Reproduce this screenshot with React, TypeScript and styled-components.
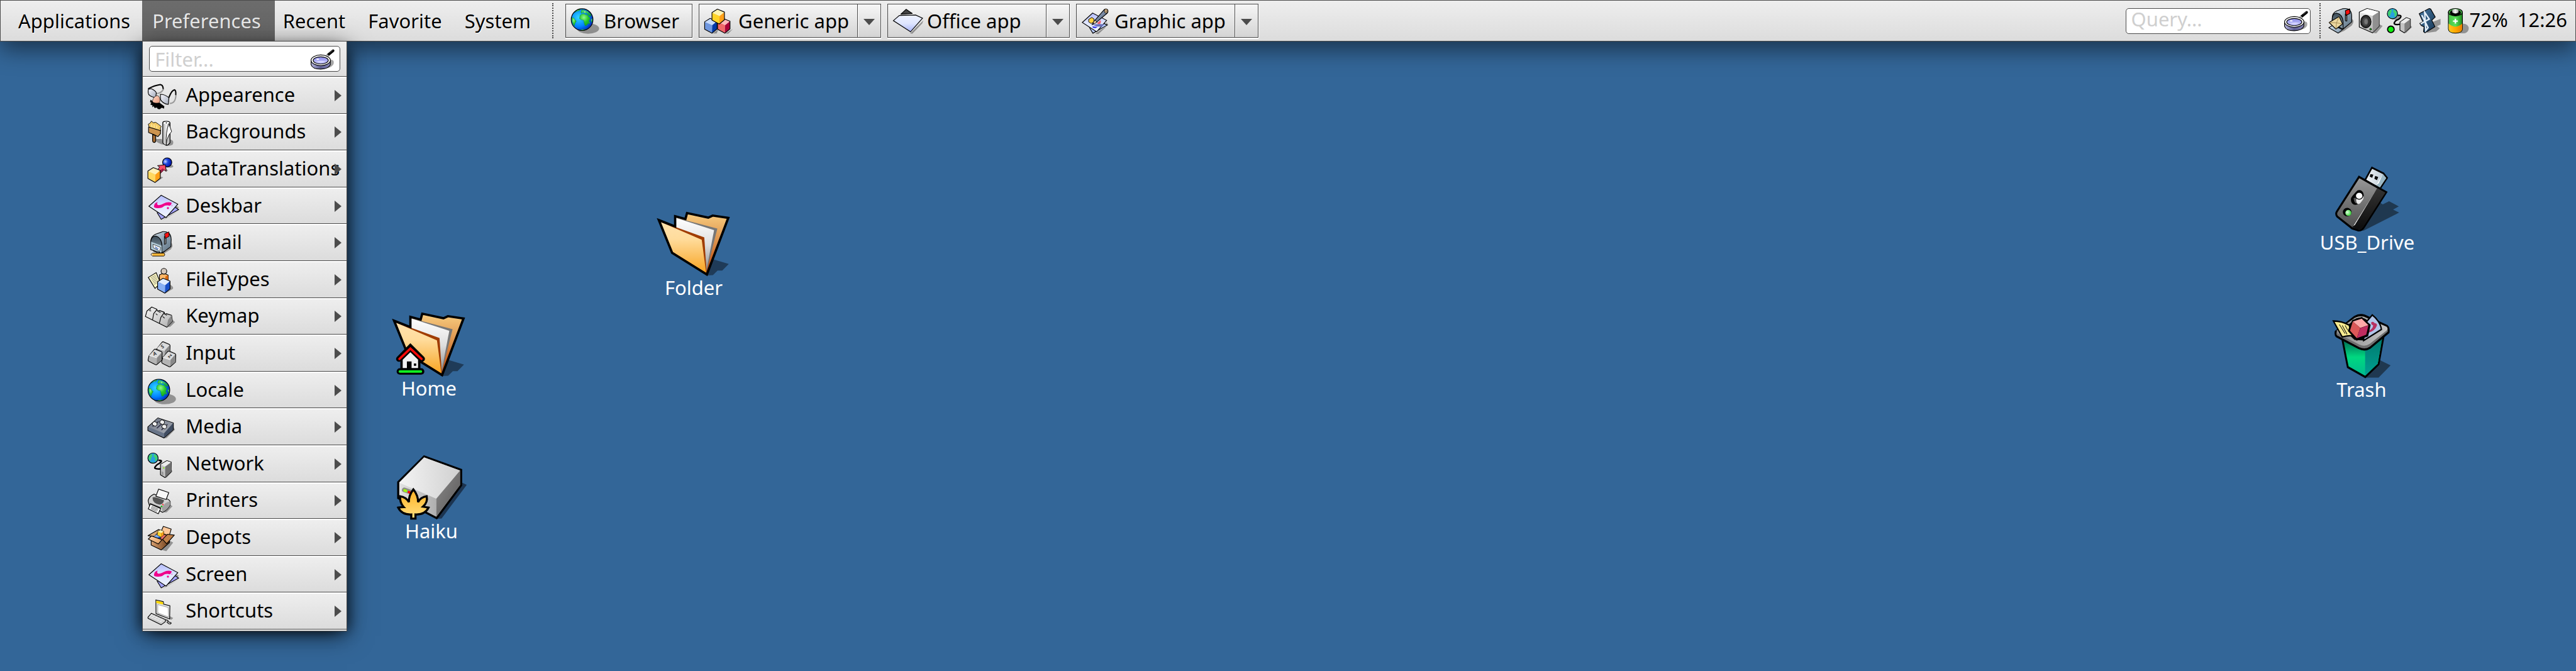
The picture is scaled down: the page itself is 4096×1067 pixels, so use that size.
import React from "react";
import styled, { createGlobalStyle } from "styled-components";

const GlobalStyle = createGlobalStyle`
  *, *::before, *::after { box-sizing: border-box; }
  html, body { margin: 0; padding: 0; }
  body, button, input {
    font-family: "Noto Sans", "Open Sans", sans-serif;
    font-size: 31px;
    line-height: 36px;
  }
  body { background: #336698; color: #000; }
`;

const ink = "#4a4a4a";

/* ---------- shared paint ---------- */

type Gradient = { id: string; stops: string[]; down?: boolean; diagonal?: boolean };

const gradients: Gradient[] = [
  { id: "folderBack", stops: ["#f8cd80", "#d98b46", "#b83a00"], down: true },
  { id: "folderFront", stops: ["#ffe2ae", "#ffdc9c", "#fbc060", "#f8a420"], down: true },
  { id: "paper", stops: ["#ffffff", "#dedede", "#8a8a8a"], down: true },
  { id: "steel", stops: ["#f4f4f4", "#d0d0d0"] },
  { id: "steelFront", stops: ["#e4e4e4", "#8c8c8c"] },
  { id: "steelSide", stops: ["#8a8a8a", "#5a5858"], diagonal: true },
  { id: "leaf", stops: ["#ffb020", "#ffe080"], down: true },
  { id: "usb", stops: ["#999999", "#4c4c4c"], down: true },
  { id: "usbSide", stops: ["#333333", "#0c0c0c"], down: true },
  { id: "plug", stops: ["#f4f6f8", "#b4c4d0"] },
  { id: "bin", stops: ["#00584c", "#00d880", "#00b890"], down: true },
  { id: "binSide", stops: ["#007a70", "#00a090"], down: true },
  { id: "rim", stops: ["#8c8c8c", "#c4c4c4"] },
  { id: "glass", stops: ["#f8f8ff", "#a4acbc"], diagonal: true },
  { id: "nose", stops: ["#ffd8c8", "#e89878"], diagonal: true },
  { id: "sheet", stops: ["#b4bcff", "#dfe5ff", "#eef4ff"], down: true },
  { id: "sheetBlue", stops: ["#eef2ff", "#dfe6ff", "#a8b4fc"], down: true },
  { id: "mail", stops: ["#dce8f0", "#8ca0b0", "#5c7080"], diagonal: true },
  { id: "mailDark", stops: ["#3c4c58", "#8ca0ac"], down: true },
  { id: "mailTray", stops: ["#dcecf4", "#7890a8"], diagonal: true },
  { id: "key", stops: ["#f6f6f6", "#b0b0b0"], diagonal: true },
  { id: "roll", stops: ["#a8a8a8", "#f0f0f0", "#9a9a9a"] },
  { id: "mixer", stops: ["#6c7484", "#a8acb4"], diagonal: true },
  { id: "lensBody", stops: ["#b8b8e0", "#5c5c90", "#8888b8"] },
  { id: "lens", stops: ["#8c8ce8", "#c8c8ff"], down: true },
  { id: "speaker", stops: ["#f0f0f0", "#a8a8a8"], diagonal: true },
  { id: "cell", stops: ["#48c048", "#58e058", "#208c20"] },
  { id: "charge", stops: ["#ffc820", "#ffa800", "#e88000"] },
  { id: "cap", stops: ["#b0b0b0", "#f8f8f8", "#a0a0a0"] },
  { id: "tooth", stops: ["#4878a0", "#183858"], diagonal: true },
  { id: "carton", stops: ["#ffd8b0", "#e09858"], diagonal: true },
  { id: "cartonDark", stops: ["#d8a070", "#6c3c18"] },
  { id: "pencil", stops: ["#a0b0c8", "#50607c"], diagonal: true },
];

const Hidden = styled.svg`
  position: absolute;
  width: 0;
  height: 0;
`;

const Paints = () => (
  <Hidden aria-hidden="true">
    <defs>
      {gradients.map((g) => (
        <linearGradient key={g.id} id={g.id} x1="0" y1="0" x2={g.down ? 0 : 1} y2={g.down || g.diagonal ? 1 : 0}>
          {g.stops.map((color, i) => (
            <stop key={i} offset={i / (g.stops.length - 1)} stopColor={color} />
          ))}
        </linearGradient>
      ))}
      <radialGradient id="ocean" cx="0.35" cy="0.4" r="0.7">
        <stop offset="0" stopColor="#30d8ff" />
        <stop offset="0.6" stopColor="#0080ff" />
        <stop offset="1" stopColor="#0020b0" />
      </radialGradient>
      <radialGradient id="land" cx="0.4" cy="0.3" r="0.8">
        <stop offset="0" stopColor="#90f890" />
        <stop offset="0.5" stopColor="#28c828" />
        <stop offset="1" stopColor="#10a020" />
      </radialGradient>
      <radialGradient id="ball" cx="0.3" cy="0.4" r="0.7">
        <stop offset="0" stopColor="#c8d8ff" />
        <stop offset="0.4" stopColor="#2048e0" />
        <stop offset="1" stopColor="#0010a0" />
      </radialGradient>
      <radialGradient id="lamp" cx="0.35" cy="0.4" r="0.7">
        <stop offset="0" stopColor="#e0ffe0" />
        <stop offset="1" stopColor="#28d028" />
      </radialGradient>
    </defs>
  </Hidden>
);

type IconProps = { w: number; h: number; box: string; stretch?: boolean; children: React.ReactNode };

const IconSvg = styled.svg<{ $w: number; $h: number }>`
  display: block;
  flex: none;
  width: ${(p) => p.$w}px;
  height: ${(p) => p.$h}px;
  overflow: visible;
`;

const Icon = ({ w, h, box, stretch, children }: IconProps) => (
  <IconSvg $w={w} $h={h} viewBox={box} preserveAspectRatio={stretch ? "none" : "xMinYMid"} aria-hidden="true">
    {children}
  </IconSvg>
);

const line = { stroke: "#000", strokeWidth: 5, strokeLinejoin: "round" as const, strokeLinecap: "round" as const };
const shade = { fill: "#000", fillOpacity: 0.35 };

/* ---------- small pictures ---------- */

const Globe = () => (
  <g>
    <ellipse cx="42" cy="62" rx="77" ry="37" {...shade} />
    <circle r="76" fill="url(#ocean)" />
    <g fill="url(#land)" stroke="#087858" strokeWidth="2">
      <path d="M-14 -30 L0 -40 L14 -40 L28 -34 L42 -32 L48 -18 L58 -12 L50 2 L48 22 L38 32 L30 42 L20 42 L14 22 L10 4 L-4 2 L-18 -8Z" />
      <path d="M-8 -54 L-2 -70 Q40 -64 62 -36 L60 -22 L46 -32 L34 -40 L30 -48 L18 -44 L6 -50 L-6 -44Z" />
      <path d="M-71 -14 L-58 -12 L-48 2 L-40 10 L-50 28 L-54 46 Q-74 18 -71 -14Z" />
      <path d="M-54 -48 Q-34 -72 -10 -74 L-20 -62 L-36 -58Z" />
      <path d="M62 0 L70 -8 L72 12 L66 20Z" />
      <path d="M48 20 L56 14 L52 30 L46 30Z" />
      <path d="M-10 70 L26 68 L12 75 L-6 75Z" />
    </g>
    <path d="M4 -62 L12 -56 L6 -50 M24 -56 L34 -52 M14 -66 L20 -60 M38 -46 L50 -40" stroke="#0880a0" strokeWidth="4" fill="none" />
    <circle r="76" fill="none" {...line} />
  </g>
);

type CubeProps = { x: number; y: number; s?: number; top: string; left: string; right: string };

/* A cube seen from above, centred on its front vertex. */
const Cube = ({ x, y, s = 1, top, left, right }: CubeProps) => (
  <g transform={`translate(${x} ${y}) scale(${s})`}>
    <path d="M-43 -22 L-5 -46 L44 -26 L10 2Z" fill={top} />
    <path d="M-43 -22 L10 2 L8 58 L-43 30Z" fill={left} />
    <path d="M44 -26 L10 2 L8 58 L44 28Z" fill={right} />
    <path d="M-43 -22 L-5 -46 L44 -26 L44 28 L8 58 L-43 30Z" fill="none" {...line} />
  </g>
);

const Cubes = () => (
  <g>
    <path d="M1078 232 L1118 200 L1105 232Z M1166 232 L1218 200 L1185 234Z" {...shade} />
    <Cube x={1064} y={172} top="#c8dcff" left="#7098e0" right="#0038a8" />
    <Cube x={1154} y={172} top="#ffb8b8" left="#f06868" right="#a80038" />
    <Cube x={1115} y={108} top="#fff4b0" left="#ffd428" right="#ffa018" />
  </g>
);

const Sheets = ({ children }: { children?: React.ReactNode }) => (
  <g>
    <path d="M176 176 L296 108 L206 162Z M262 74 L292 84 L280 100Z" {...shade} />
    <path d="M140 124 L168 170 L290 102 L262 84Z" fill="#a4a4ff" {...line} strokeLinejoin="miter" />
    <path d="M168 2 L284 64 L202 158 L82 79Z" fill="url(#sheet)" {...line} strokeLinejoin="miter" />
    {children}
  </g>
);

const PinkSheets = () => (
  <Sheets>
    <path
      d="M118 78 Q122 52 145 51 Q132 64 148 71 Q164 72 184 60 Q214 44 240 54 Q244 64 228 76 Q212 68 192 76 Q174 94 142 92 Q114 90 118 78Z"
      fill="#f0008c"
    />
    <circle cx="215" cy="92" r="7" fill="#f0008c" />
    <circle cx="243" cy="75" r="3" fill="#f0008c" />
  </Sheets>
);

const MagnifierIcon = () => (
  <Icon w={41} h={34} box="1208 66 180 150">
    <path d="M1340 145 Q1380 140 1374 172 Q1364 205 1290 210Z" {...shade} />
    <path d="M1334 112 L1370 82" stroke="#000" strokeWidth="18" strokeLinecap="round" />
    <path d="M1346 96 L1368 78" stroke="#666" strokeWidth="4" />
    <path d="M1320 110 L1336 122" stroke="#bbb" strokeWidth="14" />
    <path d="M1215 148 V180 Q1225 211 1283 211 Q1340 208 1350 180 V148Z" fill="url(#lensBody)" {...line} />
    <ellipse cx="1283" cy="149" rx="68" ry="37" fill="#fff" {...line} />
    <ellipse cx="1283" cy="150" rx="53" ry="25" fill="url(#lens)" {...line} />
    <path d="M1250 158 Q1280 172 1318 156 Q1290 150 1250 158Z" fill="#d8d8ff" />
    <ellipse cx="1262" cy="142" rx="10" ry="4" fill="#fff" />
  </Icon>
);

/* ---------- menu pictures ---------- */

const menuBox = (top: number) => `57 ${top + 32} 237 202`;
const MenuIcon = ({ top, children }: { top: number; children: React.ReactNode }) => (
  <Icon w={54} h={46} box={menuBox(top)}>
    {children}
  </Icon>
);

const AppearanceIcon = () => (
  <MenuIcon top={262}>
    <path d="M130 382 Q170 380 184 350 M228 450 Q268 450 271 392" fill="none" stroke="#999" strokeWidth="9" />
    <path d="M80 346 Q120 324 162 318 Q180 320 182 346" fill="none" stroke="#000" strokeWidth="9" strokeLinecap="round" />
    <path d="M78 352 L98 347 Q128 360 134 376 L130 406 Q104 408 86 392 Q74 384 78 352Z" fill="url(#glass)" {...line} />
    <path d="M222 408 Q242 356 262 355 Q272 360 270 388" fill="none" stroke="#000" strokeWidth="9" strokeLinecap="round" />
    <path d="M94 424 L110 436 L158 446 L190 470 L188 486 L172 480 L158 490 L144 488 L138 478 L122 482 L116 470 L105 476 L108 464 L92 456 L100 446 L90 440Z" />
    <path d="M108 440 C104 420 124 394 144 395 C160 402 162 430 156 446 C140 450 116 448 108 440Z" fill="url(#nose)" {...line} strokeWidth={3} />
    <path d="M162 386 Q196 386 222 410 L218 456 Q182 454 164 424Z" fill="url(#glass)" {...line} />
  </MenuIcon>
);

const BackgroundsIcon = () => (
  <MenuIcon top={519}>
    <path d="M130 700 L172 700 L186 740 Q150 735 130 715Z M232 704 Q262 712 248 740 Q230 752 206 746Z" {...shade} />
    <path d="M84 618 L78 597 L90 590 L100 576 L113 587 L130 584 L147 596 L170 614 L162 622 L165 642Z" fill="#f4cc68" {...line} strokeWidth={4} />
    <path d="M100 598 L104 618 M118 600 L120 622 M136 606 L138 626" stroke="#fff0b0" strokeWidth="5" />
    <path d="M80 617 L163 642 V664 L145 684 L118 670 L80 655Z" fill="#cc9450" {...line} />
    <path d="M108 670 L130 676 V714 Q128 725 118 725 Q108 723 108 714Z" fill="#a06830" {...line} />
    <path d="M179 586 Q182 577 204 577 Q228 577 230 588 V726 Q216 745 204 745 Q178 735 179 724Z" fill="url(#roll)" {...line} />
    <ellipse cx="204" cy="588" rx="20" ry="8" fill="#fff" />
    <circle cx="204" cy="588" r="4" />
    <path d="M222 594 L241 648 L222 672 Q206 700 203 745 Q198 650 222 594Z" fill="#fff" {...line} strokeWidth={4} />
  </MenuIcon>
);

const DataTranslationsIcon = () => (
  <MenuIcon top={776}>
    <path d="M236 878 Q262 884 248 896 Q236 902 214 896Z M200 900 L216 920 L200 926Z M132 1002 L182 966 L166 962 L160 975Z" {...shade} />
    <circle cx="210" cy="862" r="32" fill="url(#ball)" {...line} />
    <path d="M144 884 L197 878 L203 924 L188 914 L163 938 L144 912 L156 896Z" fill="#f84c68" {...line} strokeWidth={4} />
    <path d="M188 914 L163 938 L158 920 L180 902Z" fill="#a02048" />
    <Cube x={118} y={944} top="#fff0b8" left="#ffd860" right="#ffa018" />
  </MenuIcon>
);

const PinkSheetsIcon = () => (
  <MenuIcon top={0}>
    <g transform="translate(0 54)">
      <PinkSheets />
    </g>
  </MenuIcon>
);

const EmailIcon = () => (
  <MenuIcon top={1292}>
    <path d="M240 1425 Q256 1445 236 1470 L182 1505 L176 1496Z" {...shade} />
    <path d="M95 1415 Q98 1380 128 1366 L180 1347 Q236 1344 238 1402 L236 1452 L174 1498 L95 1472Z" fill="url(#mail)" {...line} />
    <path d="M95 1472 V1415 Q102 1378 130 1378 Q168 1388 173 1440 V1498Z" fill="url(#mailDark)" {...line} />
    <path d="M98 1418 L172 1446 V1496 L98 1470Z" fill="#b4ccd8" />
    <path d="M112 1436 L164 1458 L156 1490 L148 1478 L114 1460Z" fill="#fff" {...line} strokeWidth={3} />
    <path d="M124 1452 L150 1468 M126 1458 L144 1472" stroke="#2050b0" strokeWidth="4" />
    <path d="M192 1380 L202 1376 V1432 L192 1436Z" fill="#888" {...line} strokeWidth={4} />
    <path d="M193 1362 L222 1349 L224 1380 L198 1394Z" fill="#ff1010" {...line} strokeWidth={4} />
    <path d="M112 1484 L156 1500 M168 1494 L196 1484" stroke="#000" strokeWidth="4" />
    <path d="M108 1498 H186 Q193 1500 193 1508 Q193 1516 186 1518 H108 L97 1508Z" fill="#ffb838" {...line} strokeWidth={4} />
    <path d="M108 1500 V1516 L98 1508Z" fill="#f8d8b0" />
  </MenuIcon>
);

const FileTypesIcon = () => (
  <MenuIcon top={80}>
    <path d="M230 246 Q258 262 250 276 L196 308 L210 290Z" {...shade} />
    <path d="M78 196 L133 163 L164 236 L125 273Z" fill="#fffac4" {...line} strokeLinejoin="miter" />
    <path d="M94 200 L130 180 M99 209 L134 189 M104 218 L139 198 M109 227 L142 208 M114 236 L146 218 M119 245 L148 228" stroke="#555" strokeWidth="3" />
    <path d="M156 178 L186 166 L217 180 V222 H156Z" fill="#ffb868" {...line} />
    <path d="M197 190 L217 180 V222 H197Z" fill="#d86810" />
    <circle cx="187" cy="153" r="20" fill="#d4c8bc" {...line} />
    <Cube x={186} y={248} top="#e0ecff" left="#88b0f4" right="#1850c8" />
  </MenuIcon>
);

const KeymapIcon = () => (
  <MenuIcon top={338}>
    <path d="M248 496 L265 512 L232 543 L207 548Z" {...shade} />
    <path d="M102 406 L138 422 L142 434 L158 431 L188 442 L192 456 L205 453 L240 463 L247 505 L207 547 L58 472 L68 435Z" fill="url(#key)" {...line} />
    <path d="M240 463 L247 505 L207 547 L216 496Z" fill="#888" />
    <path d="M138 424 L116 452 L108 494 M190 444 L166 478 L156 518" fill="none" {...line} />
    <path d="M84 430 L98 434 M92 420 L94 426 M130 452 L142 462 M148 438 L164 444 M178 472 L192 484 M198 460 L208 464" stroke="#222" strokeWidth="5" />
  </MenuIcon>
);

const KeyLetter = styled.text`
  font-size: 34px;
  font-weight: 600;
  text-anchor: middle;
  fill: #222;
`;

const Keycap = ({ x, y, letter, turn }: { x: number; y: number; letter: string; turn: number }) => (
  <g transform={`translate(${x} ${y})`}>
    <path d="M-4 -54 Q0 -57 6 -54 L44 -38 Q50 -34 50 -28 L48 22 L12 53 Q8 56 2 53 L-44 30 Q-50 26 -48 18 L-42 -8Z" fill="#b4b4b4" {...line} />
    <path d="M-4 -50 L46 -32 L14 4 L-40 -12Z" fill="#dcdcdc" />
    <path d="M46 -30 V22 L12 50 L14 6Z" fill="#888" />
    <path d="M-42 -12 L12 6" stroke="#fff" strokeWidth="4" />
    <KeyLetter transform={`translate(2 -12) rotate(${turn})`}>{letter}</KeyLetter>
  </g>
);

const InputIcon = () => (
  <MenuIcon top={596}>
    <Keycap x={180} y={703} letter="S" turn={-30} />
    <Keycap x={125} y={754} letter="A" turn={-20} />
    <Keycap x={220} y={768} letter="Z" turn={40} />
  </MenuIcon>
);

const LocaleIcon = () => (
  <MenuIcon top={852}>
    <g transform="translate(152 982)">
      <Globe />
    </g>
  </MenuIcon>
);

const Knob = ({ x, y }: { x: number; y: number }) => (
  <path transform={`translate(${x} ${y})`} d="M-16 -8 L-2 -17 L15 -10 L16 6 L4 16 L-14 8Z" fill="#eee" {...line} strokeWidth={4} />
);

const MediaIcon = () => (
  <MenuIcon top={1110}>
    <path d="M255 1245 L264 1262 L206 1320 L188 1322Z" {...shade} />
    <path d="M145 1180 L253 1215 V1262 L187 1320 L75 1268 V1243Z" fill="#687488" {...line} />
    <path d="M145 1182 L251 1216 L188 1287 L78 1243Z" fill="url(#mixer)" />
    <path d="M251 1217 V1262 L189 1317 V1287Z" fill="#404c60" />
    <path d="M108 1240 L150 1204 M138 1252 L178 1215 M170 1264 L212 1224" stroke="#282840" strokeWidth="6" />
    <Knob x={123} y={1222} />
    <Knob x={175} y={1210} />
    <Knob x={190} y={1241} />
  </MenuIcon>
);

const MiniGlobe = ({ x, y }: { x: number; y: number }) => (
  <g transform={`translate(${x} ${y})`}>
    <circle r="36" fill="#28a0e0" />
    <path d="M-32 -10 L-18 -26 L-4 -28 L-8 -8 L-14 4 L-18 20 L-30 12Z M8 -30 L30 -14 L32 6 L20 22 L12 16 L16 0 L4 -12Z M-10 24 L4 30 L-4 34Z" fill="#40d070" />
    <circle r="36" fill="none" {...line} />
  </g>
);

const NetworkIcon = () => (
  <MenuIcon top={-43}>
    <path d="M240 128 L247 140 L206 184 L196 186Z" {...shade} />
    <path d="M148 64 C190 60 160 84 140 94 C108 122 126 126 166 123" fill="none" stroke="#000" strokeWidth="11" />
    <MiniGlobe x={111} y={48} />
    <path d="M208 66 L238 76 L237 145 L195 184 L163 165 V92Z" fill="#c4c4c4" {...line} />
    <path d="M208 68 L236 77 L195 108 L165 93Z" fill="#ececec" />
    <path d="M236 79 V145 L196 182 V108Z" fill="#707070" />
    <path d="M171 140 L184 146 V170 L171 162Z" fill="#999" />
    <circle cx="186" cy="117" r="5" fill="#80f000" />
  </MenuIcon>
);

const PrintersIcon = () => (
  <MenuIcon top={215}>
    <path d="M232 378 L247 388 L206 430 L184 430Z" {...shade} />
    <path d="M118 303 Q82 318 77 350 L86 384 L178 430 Q212 416 231 378 V356 Q226 340 204 336Z" fill="#d0d0d0" {...line} />
    <path d="M231 356 V378 Q212 414 178 428 L172 400 Q200 350 231 356Z" fill="#a0a0a0" />
    <path d="M150 268 L221 292 L203 340 L131 318Z" fill="#f8f8f8" {...line} />
    <path d="M108 326 Q120 316 188 346 Q184 374 156 377 Q106 366 108 326Z" fill="#555" />
    <path d="M90 364 L168 396 L160 408 L90 378Z" fill="#333" />
    <path d="M92 372 L164 404 L148 440 L78 406Z" fill="#fff" {...line} />
    <path d="M102 388 L148 408 M98 396 L144 416 M96 404 L138 424" stroke="#111" strokeWidth="3" />
    <circle cx="180" cy="376" r="6" fill="#f05050" />
    <circle cx="171" cy="389" r="6" fill="#18b018" />
  </MenuIcon>
);

const DepotsIcon = () => (
  <MenuIcon top={473}>
    <path d="M226 626 L252 640 L204 700 L172 692Z" {...shade} />
    <path d="M98 616 V658 L168 692 L226 640 V606Z" fill="url(#cartonDark)" {...line} />
    <path d="M76 592 L150 549 L166 556 L118 598Z" fill="#d8a878" {...line} />
    <path d="M183 527 L238 546 L224 592 L164 572Z" fill="#ffc898" {...line} />
    <path d="M110 600 L160 572 L226 592 L172 628Z" fill="#5c3418" />
    <path d="M116 596 L140 582 L162 596 L160 620Z" fill="#78a8f0" />
    <path d="M140 606 L162 600 V622Z" fill="#0038a8" />
    <path d="M166 602 L186 586 L212 594 L172 624Z" fill="#f07070" />
    <Cube x={164} y={574} s={0.5} top="#fff4b0" left="#ffd428" right="#ffa018" />
    <path d="M78 616 L100 594 L174 620 L148 650Z" fill="url(#carton)" {...line} />
    <path d="M178 618 L212 582 L260 588 L206 648Z" fill="#c08048" {...line} />
  </MenuIcon>
);

const ShortcutsIcon = () => (
  <MenuIcon top={988}>
    <path d="M228 1155 L252 1168 L240 1180 L226 1176Z" {...shade} />
    <path d="M196 1182 Q222 1180 214 1192 L238 1202 Q238 1212 220 1208 L208 1196" fill="#ddd" {...line} />
    <path d="M131 1042 L183 1054 L185 1072 L229 1082 L227 1175 L132 1138Z" fill="#e4e4e4" {...line} strokeLinejoin="miter" />
    <path d="M134 1046 L181 1057 V1074 L134 1064Z" fill="#ffd800" />
    <path d="M144 1074 L217 1094 L220 1162 L144 1132Z" fill="#fff" stroke="#aaa" strokeWidth="5" />
    <path d="M100 1135 L200 1180 L196 1195 L168 1215 L76 1170 V1162Z" fill="#ccc" {...line} />
    <path d="M94 1146 L186 1188 M86 1156 L178 1198 M106 1142 L86 1160 M124 1150 L104 1168 M142 1158 L122 1178 M160 1166 L140 1186 M178 1174 L158 1196" stroke="#fff" strokeWidth="3" />
  </MenuIcon>
);

/* ---------- toolbar pictures ---------- */

const BrowserIcon = () => (
  <Icon w={44} h={41} box="90 55 193 180">
    <g transform="translate(167 135)">
      <Globe />
    </g>
  </Icon>
);

const GenericIcon = () => (
  <Icon w={44} h={41} box="1019 55 193 180">
    <Cubes />
  </Icon>
);

const OfficeIcon = () => (
  <Icon w={44} h={41} box="0 55 193 180">
    <path d="M130 222 L212 140 L204 162 L134 234 L118 230Z" {...shade} />
    <path d="M91 63 L134 92 L54 97Z" fill="#444" {...line} />
    <path d="M44 106 L158 103 L206 125 L122 220 L2 142Z" fill="url(#sheetBlue)" {...line} strokeLinejoin="miter" />
  </Icon>
);

const GraphicIcon = () => (
  <Icon w={44} h={41} box="84 55 193 180">
    <path d="M178 234 L268 172 L258 150 L250 190 L200 236Z" {...shade} />
    <path d="M138 190 L162 230 L262 173 L236 160Z" fill="#b8ccff" {...line} strokeLinejoin="miter" />
    <path d="M160 89 L258 140 L188 220 L88 155Z" fill="url(#sheet)" {...line} strokeLinejoin="miter" />
    <path d="M134 132 L154 120 L170 130 L168 152 L150 162 L134 152Z" fill="#ffd040" {...line} strokeWidth={4} />
    <path d="M216 138 Q222 160 208 166 Q194 168 192 158Z" fill="#f06070" />
    <path d="M162 170 Q200 164 240 168 L224 184 Q190 186 162 170Z" fill="#6870b8" />
    <path d="M158 182 L196 186 L180 194 L162 192Z" fill="#2828f0" />
    <path d="M176 140 L240 66 Q256 54 266 68 Q270 82 262 90 L188 152Z" fill="url(#pencil)" {...line} />
    <path d="M156 170 L176 138 L190 152Z" fill="#f0d0a0" {...line} strokeWidth={4} />
    <path d="M156 170 L164 156 L170 163Z" />
    <ellipse cx="254" cy="75" rx="12" ry="14" fill="#f4cc98" {...line} strokeWidth={4} />
    <circle cx="254" cy="75" r="4" />
  </Icon>
);

/* ---------- tray pictures ---------- */

const TrayMail = () => (
  <Icon w={41} h={41} box="8 50 180 180">
    <path d="M174 125 Q196 140 172 172 L120 208 L80 226Z" {...shade} />
    <path d="M36 120 Q36 84 66 70 L108 54 Q170 42 172 104 V146 L112 196 L36 160Z" fill="url(#mail)" {...line} />
    <path d="M36 130 Q36 86 66 84 Q108 92 112 144 V196 L36 160Z" fill="url(#mailDark)" {...line} />
    <path d="M12 186 L42 168 L108 200 L78 224Z" fill="url(#mailTray)" {...line} />
    <path d="M14 150 L84 108 L108 160 L62 196Z" fill="#ecd8a0" {...line} />
    <path d="M14 150 L66 152 L84 108 M66 152 L62 196 M66 152 L106 160" fill="none" stroke="#a08850" strokeWidth="4" />
    <path d="M128 90 L138 86 V140 L128 138Z" fill="#999" {...line} />
    <path d="M128 68 L158 55 L160 86 L132 100Z" fill="#ff1010" {...line} />
  </Icon>
);

const TraySpeaker = () => (
  <Icon w={41} h={41} box="219 50 180 180">
    <path d="M364 162 L388 174 L344 226 L318 222Z" {...shade} />
    <path d="M280 52 L364 74 V176 L318 222 L225 182 V78Z" fill="url(#speaker)" {...line} />
    <path d="M280 54 L362 75 L318 104 L227 79Z" fill="#fcfcfc" />
    <path d="M362 76 V176 L319 220 V104Z" fill="#909090" />
    <ellipse cx="271" cy="144" rx="36" ry="44" fill="#333" {...line} />
    <ellipse cx="268" cy="144" rx="24" ry="32" fill="#4c4c4c" stroke="#222" strokeWidth="4" />
    <ellipse cx="272" cy="144" rx="12" ry="18" fill="#777" />
    <circle cx="304" cy="197" r="6" fill="#20e020" {...line} strokeWidth={4} />
  </Icon>
);

const TrayNetwork = () => (
  <Icon w={41} h={41} box="430 50 180 180">
    <ellipse cx="474" cy="112" rx="34" ry="18" {...shade} />
    <path d="M584 172 L594 182 L552 222 L540 224Z" {...shade} />
    <path d="M494 100 C534 96 512 126 484 134 C456 160 470 168 510 163" fill="none" stroke="#000" strokeWidth="10" />
    <MiniGlobe x={457} y={88} />
    <path d="M554 116 L582 126 V184 L540 222 L509 204 V148Z" fill="#c4c4c4" {...line} />
    <path d="M554 118 L580 127 L540 158 L511 148Z" fill="#ececec" />
    <path d="M581 128 V184 L541 220 V158Z" fill="#808080" />
    <circle cx="446" cy="198" r="23" fill="#10f010" stroke="#000" strokeWidth="8" />
  </Icon>
);

const TrayBluetooth = () => (
  <Icon w={41} h={41} box="643 50 180 180">
    <path d="M730 150 L795 125 V164 L770 176 L790 190 L764 214 L700 222Z" {...shade} />
    <path d="M646 88 L716 52 L726 56 L758 112 L734 134 L756 180 L686 222 L676 214 L680 180 L662 172 L650 156 L672 146Z" fill="url(#tooth)" {...line} />
    <path d="M656 160 L716 126 L684 78 L692 206 L708 186 L664 98" fill="none" stroke="#e8f2fa" strokeWidth="10" />
  </Icon>
);

const TrayBattery = () => (
  <Icon w={33} h={41} box="852 50 145 180">
    <path d="M948 158 Q992 160 990 196 Q984 228 946 226 L900 224Z" {...shade} />
    <path d="M848 78 V196 Q850 224 897 224 Q944 224 946 196 V78Z" fill="url(#cell)" {...line} />
    <path d="M850 158 Q897 200 945 158 V196 Q942 222 897 222 Q852 222 850 196Z" fill="url(#charge)" />
    <ellipse cx="897" cy="78" rx="49" ry="26" fill="#48b048" {...line} />
    <ellipse cx="897" cy="82" rx="38" ry="22" fill="#000" />
    <path d="M875 62 Q897 48 919 62 V80 Q897 94 875 80Z" fill="url(#cap)" />
    <path d="M897 124 V158 M880 141 H914" stroke="#fff" strokeWidth="10" />
  </Icon>
);

/* ---------- desktop pictures ---------- */

const FolderArt = () => (
  <g>
    <path d="M1440 290 L1508 311 L1480 340 L1460 340 L1440 360 L1412 361Z" fill="#1f3b58" />
    <path d="M1208 118 L1278 146 V101 L1322 113 L1329 87 L1420 107 L1439 98 L1506 108 L1414 357 L1265 262Z" fill="url(#folderBack)" />
    <path d="M1284 108 L1459 155 L1412 345Z" fill="#777" />
    <path d="M1282 108 L1445 162 L1411 345 L1282 150Z" fill="url(#paper)" />
    <path d="M1216 125 L1403 194 L1413 352Z" fill="#a03c00" />
    <path d="M1216 126 L1392 204 L1411 350 L1268 258Z" fill="url(#folderFront)" />
    <path d="M1208 118 L1278 146 V101 L1322 113 L1329 87 L1420 107 L1439 98 L1506 108 L1414 357 L1265 262Z" fill="none" stroke="#000" strokeWidth="10" />
  </g>
);

const FolderIcon = () => (
  <Icon w={116} h={102} box="1201 82 313 282" stretch>
    <FolderArt />
  </Icon>
);

const HomeIcon = () => (
  <Icon w={116} h={102} box="64 525 313 282" stretch>
    <g transform="translate(-1137 443)">
      <FolderArt />
    </g>
    <path d="M103 730 V775 H179 V730 L141 692Z" fill="#f0f0f0" stroke="#000" strokeWidth="10" />
    <path d="M92 729 L141 678 L191 729" fill="none" stroke="#000" strokeWidth="25" strokeLinecap="round" />
    <path d="M94 729 L141 683 L189 729" fill="none" stroke="#ff0808" strokeWidth="10" strokeLinecap="round" />
    <path d="M126 740 H146 V772 H126Z M156 749 H166 V759 H156Z" />
    <path d="M96 784 H187" stroke="#000" strokeWidth="28" strokeLinecap="round" />
    <path d="M96 784 H186" stroke="#10f020" strokeWidth="11" strokeLinecap="round" />
  </Icon>
);

const HaikuIcon = () => (
  <Icon w={116} h={102} box="72 1158 313 282" stretch>
    <path d="M360 1278 L380 1288 L272 1436 L252 1437Z" fill="#1c3450" />
    <path d="M197 1163 L356 1222 V1290 L251 1434 L86 1346 V1276Z" fill="url(#steelFront)" stroke="#000" strokeWidth="9" />
    <path d="M197 1167 L352 1225 L249 1349 L90 1278Z" fill="url(#steel)" />
    <path d="M351 1226 V1289 L250 1427 V1349Z" fill="url(#steelSide)" />
    <path d="M112 1310 L140 1320" stroke="#8c8c84" strokeWidth="20" strokeLinecap="round" />
    <path d="M110 1306 L125 1311 L122 1321 L108 1316Z" fill="#a0ff00" />
    <path d="M129 1314 L140 1318 L136 1328 L126 1322Z" fill="#f00" />
    <path
      d="M151 1308 Q172 1335 171 1364 Q182 1342 208 1338 Q214 1364 192 1384 Q206 1386 216 1388 Q200 1420 160 1418 V1436 H142 V1418 Q102 1420 86 1388 Q96 1386 110 1386 Q92 1366 94 1338 Q120 1342 132 1364 Q130 1336 151 1308Z"
      fill="url(#leaf)"
      stroke="#000"
      strokeWidth="9"
    />
  </Icon>
);

const UsbIcon = () => (
  <Icon w={116} h={102} box="240 98 510 391" stretch>
    <path d="M570 310 L604 328 L648 309 L716 340 L676 360 L718 378 L470 488 L440 488Z" fill="#1f3850" />
    <path d="M528 104 L609 139 L634 166 L582 236 L480 180Z" fill="url(#plug)" stroke="#000" strokeWidth="11" />
    <path d="M604 144 L628 168 L580 228 L556 210Z" fill="#9cb8c4" />
    <path d="M604 144 L556 212 L576 200Z" fill="#fff" />
    <path d="M518 143 L538 147 L530 166 L512 158Z M551 155 L572 161 L563 180 L545 172Z" />
    <path d="M438 160 L628 254 L470 470 Q455 490 430 486 L390 474 L285 402 Q272 386 284 370Z" fill="url(#usb)" stroke="#000" strokeWidth="13" />
    <path d="M564 230 L622 256 L466 466 Q450 484 426 480 L392 466Z" fill="url(#usbSide)" />
    <path d="M564 230 L396 462 L410 452 Z" fill="#fff" />
    <path d="M412 300 L440 272" stroke="#000" strokeWidth="62" strokeLinecap="round" />
    <path d="M434 306 L450 288" stroke="#e8e8e8" strokeWidth="38" strokeLinecap="round" />
    <path d="M400 290 Q404 326 424 322 Q414 306 420 286Z" fill="#555" />
    <ellipse cx="439" cy="276" rx="25" ry="21" fill="#fff" stroke="#000" strokeWidth="5" />
    <ellipse cx="355" cy="375" rx="30" ry="26" />
    <ellipse cx="363" cy="380" rx="21" ry="18" fill="url(#lamp)" />
  </Icon>
);

const TrashIcon = () => (
  <Icon w={116} h={102} box="194 997 510 391" stretch>
    <path d="M578 1280 L652 1311 L568 1386 H478Z" fill="#1f3850" />
    <path d="M312 1140 L353 1322 L475 1382 L568 1304 L602 1140Z" fill="url(#bin)" stroke="#000" strokeWidth="13" />
    <path d="M474 1190 V1374 L562 1302 L592 1150Z" fill="url(#binSide)" />
    <path d="M268 1106 L400 1016 Q435 998 470 1008 L628 1072 Q642 1082 638 1110 L508 1204 Q472 1224 430 1206 L274 1134 Q264 1126 268 1106Z" fill="#707070" stroke="#000" strokeWidth="13" />
    <path d="M274 1100 L402 1022 Q436 1008 466 1016 L624 1076 Q636 1086 626 1098 L506 1180 Q472 1200 432 1184 L280 1116Z" fill="url(#rim)" />
    <path d="M320 1090 L410 1026 Q440 1014 470 1026 L590 1084 L470 1160 L400 1156Z" fill="#000" />
    <path d="M252 1041 Q310 1040 362 1066 L386 1130 Q340 1132 314 1138Z" fill="#f8ec90" stroke="#000" strokeWidth="9" />
    <path d="M294 1062 L334 1118 M314 1068 L348 1122 M334 1068 L352 1096" stroke="#000" strokeWidth="4" />
    <path d="M524 1004 Q580 1044 588 1092 L464 1160 L470 1060Z" fill="#b0c4e8" stroke="#000" strokeWidth="9" />
    <path d="M516 1050 Q530 1040 540 1054 Q560 1056 556 1070 Q540 1104 498 1112 L502 1100 Q530 1086 530 1066 Q516 1066 516 1050Z" fill="#b83060" />
    <path d="M388 1040 L450 1023 L506 1066 L490 1130 L416 1154 L360 1100Z" fill="#000" stroke="#000" strokeWidth="12" />
    <path d="M388 1044 L450 1027 L497 1066 L440 1083Z" fill="#ffa8a8" />
    <path d="M388 1044 L440 1083 L416 1146 L368 1100Z" fill="#dc5858" />
    <path d="M497 1067 L440 1084 L416 1146 L482 1124Z" fill="#c02c60" />
  </Icon>
);

/* ---------- layout ---------- */

const Desktop = styled.div`
  position: relative;
  display: flex;
  flex-direction: column;
  min-height: 100vh;
  background: #336698;
  overflow: hidden;
`;

const TopBar = styled.header`
  position: relative;
  z-index: 1;
  display: flex;
  align-items: center;
  justify-content: space-between;
  height: 66px;
  border: 1px solid ${ink};
  background: linear-gradient(#eeeeee, #dcdcdc);
  box-shadow: 0 12px 36px rgba(0, 0, 0, 0.5);
`;

const BarGroup = styled.div`
  display: flex;
  align-items: center;
  align-self: stretch;
`;

const MenuBar = styled.nav`
  display: flex;
  align-self: stretch;
`;

const MenuSlot = styled.div`
  position: relative;
  display: flex;
`;

const MenuTitle = styled.button<{ $open?: boolean; $left: number; $right: number }>`
  border: 0;
  padding: 0 ${(p) => p.$right}px 0 ${(p) => p.$left}px;
  background: ${(p) => (p.$open ? "linear-gradient(#6c6c6c, #646464)" : "none")};
  color: ${(p) => (p.$open ? "#e8e8e8" : "#000")};
  text-shadow: 1px 1px 0 ${(p) => (p.$open ? "#505050" : "#fff")};
  white-space: nowrap;
`;

const Divider = styled.div<{ $left: number; $right: number }>`
  height: 56px;
  margin: 0 ${(p) => p.$right}px 0 ${(p) => p.$left}px;
  border-left: 2px dotted ${ink};
`;

const AppBar = styled.div`
  display: flex;
  gap: 10px;
`;

const AppFrame = styled.div`
  display: flex;
  height: 54px;
  border: 1px solid ${ink};
  background: linear-gradient(#f6f6f6, #d4d4d4);
  box-shadow: 1px 1px 0 #fff, 0 2px 0 #fff;
`;

const AppButton = styled.button<{ $tight?: boolean; $split?: boolean }>`
  display: flex;
  align-items: center;
  gap: ${(p) => (p.$tight ? 8 : 10)}px;
  min-width: ${(p) => (p.$split ? 251 : 200)}px;
  padding: 0 8px;
  border: 0;
  background: none;
  color: #000;
  white-space: nowrap;
`;

const SplitArrow = styled.button`
  display: flex;
  align-items: center;
  justify-content: center;
  width: 37px;
  padding: 4px 0 0;
  border: 0;
  border-left: 1px solid ${ink};
  box-shadow: inset 1px 0 0 #fff;
  background: none;
`;

const Field = styled.label<{ $raised?: boolean }>`
  display: flex;
  align-items: center;
  width: ${(p) => (p.$raised ? "294px" : "auto")};
  height: 41px;
  padding: 0 ${(p) => (p.$raised ? 1 : 6)}px 0 8px;
  border: 1px solid ${ink};
  border-radius: 5px;
  background: #fff;
`;

const FieldInput = styled.input<{ $raised?: boolean }>`
  flex: 1;
  min-width: 0;
  height: 100%;
  padding: 0 0 ${(p) => (p.$raised ? 6 : 0)}px;
  border: 0;
  outline: 0;
  background: none;
  &::placeholder { color: #cfcfcf; opacity: 1; }
`;

const Tray = styled.div`
  display: flex;
  align-items: center;
  gap: 7px;
`;

const Status = styled.div`
  display: flex;
  gap: 15px;
  padding: 0 13px 4px 0;
`;

const Popup = styled.div`
  position: absolute;
  top: 100%;
  left: 0;
  width: 326px;
  padding-bottom: 2px;
  border: 1px solid ${ink};
  background: #f2f2f2;
  box-shadow:
    0 8px 36px rgba(0, 0, 0, 0.5),
    10px 6px 20px -8px rgba(0, 0, 0, 0.6),
    -10px 6px 20px -8px rgba(0, 0, 0, 0.6);
`;

const FilterRow = styled.div`
  padding: 7px 10px;
  border-bottom: 1px solid ${ink};
  background: linear-gradient(#eeeeee, #dedede);
`;

const MenuList = styled.ul`
  display: grid;
  grid-template-rows: repeat(15, 1fr);
  height: 879px;
  margin: 0;
  padding: 0;
  list-style: none;
`;

const MenuRow = styled.button`
  display: grid;
  grid-template-columns: 54px minmax(0, 1fr) 11px;
  column-gap: 9px;
  align-items: center;
  width: 100%;
  height: 100%;
  padding: 0 8px 0 4px;
  border: 0;
  border-top: 2px solid #fff;
  border-bottom: 1px solid ${ink};
  background: linear-gradient(#eeeeee, #dcdcdc);
  color: #000;
  text-align: left;
`;

const RowLabel = styled.span`
  white-space: nowrap;
  padding: 0 0 4px 1px;
`;

const Workspace = styled.main`
  flex: 1;
`;

const DesktopItem = styled.button<{ $top: number; $left?: number; $right?: number }>`
  position: absolute;
  top: ${(p) => p.$top}px;
  ${(p) => (p.$left !== undefined ? `left: ${p.$left}px;` : `right: ${p.$right}px;`)}
  display: flex;
  flex-direction: column;
  align-items: center;
  width: 160px;
  padding: 0;
  border: 0;
  background: none;
  color: #fff;
`;

const Pointer = ({ down }: { down?: boolean }) => (
  <IconSvg $w={down ? 18 : 11} $h={down ? 10 : 18} viewBox={down ? "0 0 18 10" : "0 0 11 18"} aria-hidden="true">
    <path d={down ? "M0 0 H18 L9 10Z" : "M0 0 V18 L11 9Z"} fill="#4c4c4c" />
  </IconSvg>
);

/* ---------- data ---------- */

const preferences = [
  { label: "Appearence", Picture: AppearanceIcon },
  { label: "Backgrounds", Picture: BackgroundsIcon },
  { label: "DataTranslations", Picture: DataTranslationsIcon },
  { label: "Deskbar", Picture: PinkSheetsIcon },
  { label: "E-mail", Picture: EmailIcon },
  { label: "FileTypes", Picture: FileTypesIcon },
  { label: "Keymap", Picture: KeymapIcon },
  { label: "Input", Picture: InputIcon },
  { label: "Locale", Picture: LocaleIcon },
  { label: "Media", Picture: MediaIcon },
  { label: "Network", Picture: NetworkIcon },
  { label: "Printers", Picture: PrintersIcon },
  { label: "Depots", Picture: DepotsIcon },
  { label: "Screen", Picture: PinkSheetsIcon },
  { label: "Shortcuts", Picture: ShortcutsIcon },
];

const menus = [
  { label: "Applications", left: 28, right: 19 },
  { label: "Preferences", left: 16, right: 22, open: true },
  { label: "Recent", left: 13, right: 20 },
  { label: "Favorite", left: 16, right: 20 },
  { label: "System", left: 16, right: 20 },
];

const apps = [
  { label: "Browser", Picture: BrowserIcon, split: false, tight: true },
  { label: "Generic app", Picture: GenericIcon, split: true },
  { label: "Office app", Picture: OfficeIcon, split: true },
  { label: "Graphic app", Picture: GraphicIcon, split: true, tight: true },
];

const desktopItems = [
  { label: "Folder", Picture: FolderIcon, top: 337, left: 1023 },
  { label: "Home", Picture: HomeIcon, top: 497, left: 602 },
  { label: "Haiku", Picture: HaikuIcon, top: 724, left: 606 },
  { label: "USB_Drive", Picture: UsbIcon, top: 265, right: 252 },
  { label: "Trash", Picture: TrashIcon, top: 499, right: 261 },
];

const PreferencesMenu = () => (
  <Popup>
    <FilterRow>
      <Field>
        <FieldInput type="text" placeholder="Filter..." aria-label="Filter" />
        <MagnifierIcon />
      </Field>
    </FilterRow>
    <MenuList>
      {preferences.map(({ label, Picture }) => (
        <li key={label}>
          <MenuRow type="button">
            <Picture />
            <RowLabel>{label}</RowLabel>
            <Pointer />
          </MenuRow>
        </li>
      ))}
    </MenuList>
  </Popup>
);

export default function App() {
  return (
    <Desktop>
      <GlobalStyle />
      <Paints />
      <TopBar>
        <BarGroup>
          <MenuBar>
            {menus.map((m) => (
              <MenuSlot key={m.label}>
                <MenuTitle type="button" $open={m.open} $left={m.left} $right={m.right}>
                  {m.label}
                </MenuTitle>
                {m.open && <PreferencesMenu />}
              </MenuSlot>
            ))}
          </MenuBar>
          <Divider $left={14} $right={19} />
          <AppBar>
            {apps.map(({ label, Picture, split, tight }) => (
              <AppFrame key={label}>
                <AppButton type="button" $split={split} $tight={tight}>
                  <Picture />
                  {label}
                </AppButton>
                {split && (
                  <SplitArrow type="button" aria-label={`${label} windows`}>
                    <Pointer down />
                  </SplitArrow>
                )}
              </AppFrame>
            ))}
          </AppBar>
        </BarGroup>
        <BarGroup>
          <Field $raised>
            <FieldInput $raised type="text" placeholder="Query..." aria-label="Query" />
            <MagnifierIcon />
          </Field>
          <Divider $left={14} $right={12} />
          <Tray>
            <TrayMail />
            <TraySpeaker />
            <TrayNetwork />
            <TrayBluetooth />
            <TrayBattery />
          </Tray>
          <Status>
            <span>72%</span>
            <time>12:26</time>
          </Status>
        </BarGroup>
      </TopBar>
      <Workspace>
        {desktopItems.map(({ label, Picture, top, left, right }) => (
          <DesktopItem key={label} type="button" $top={top} $left={left} $right={right}>
            <Picture />
            {label}
          </DesktopItem>
        ))}
      </Workspace>
    </Desktop>
  );
}
